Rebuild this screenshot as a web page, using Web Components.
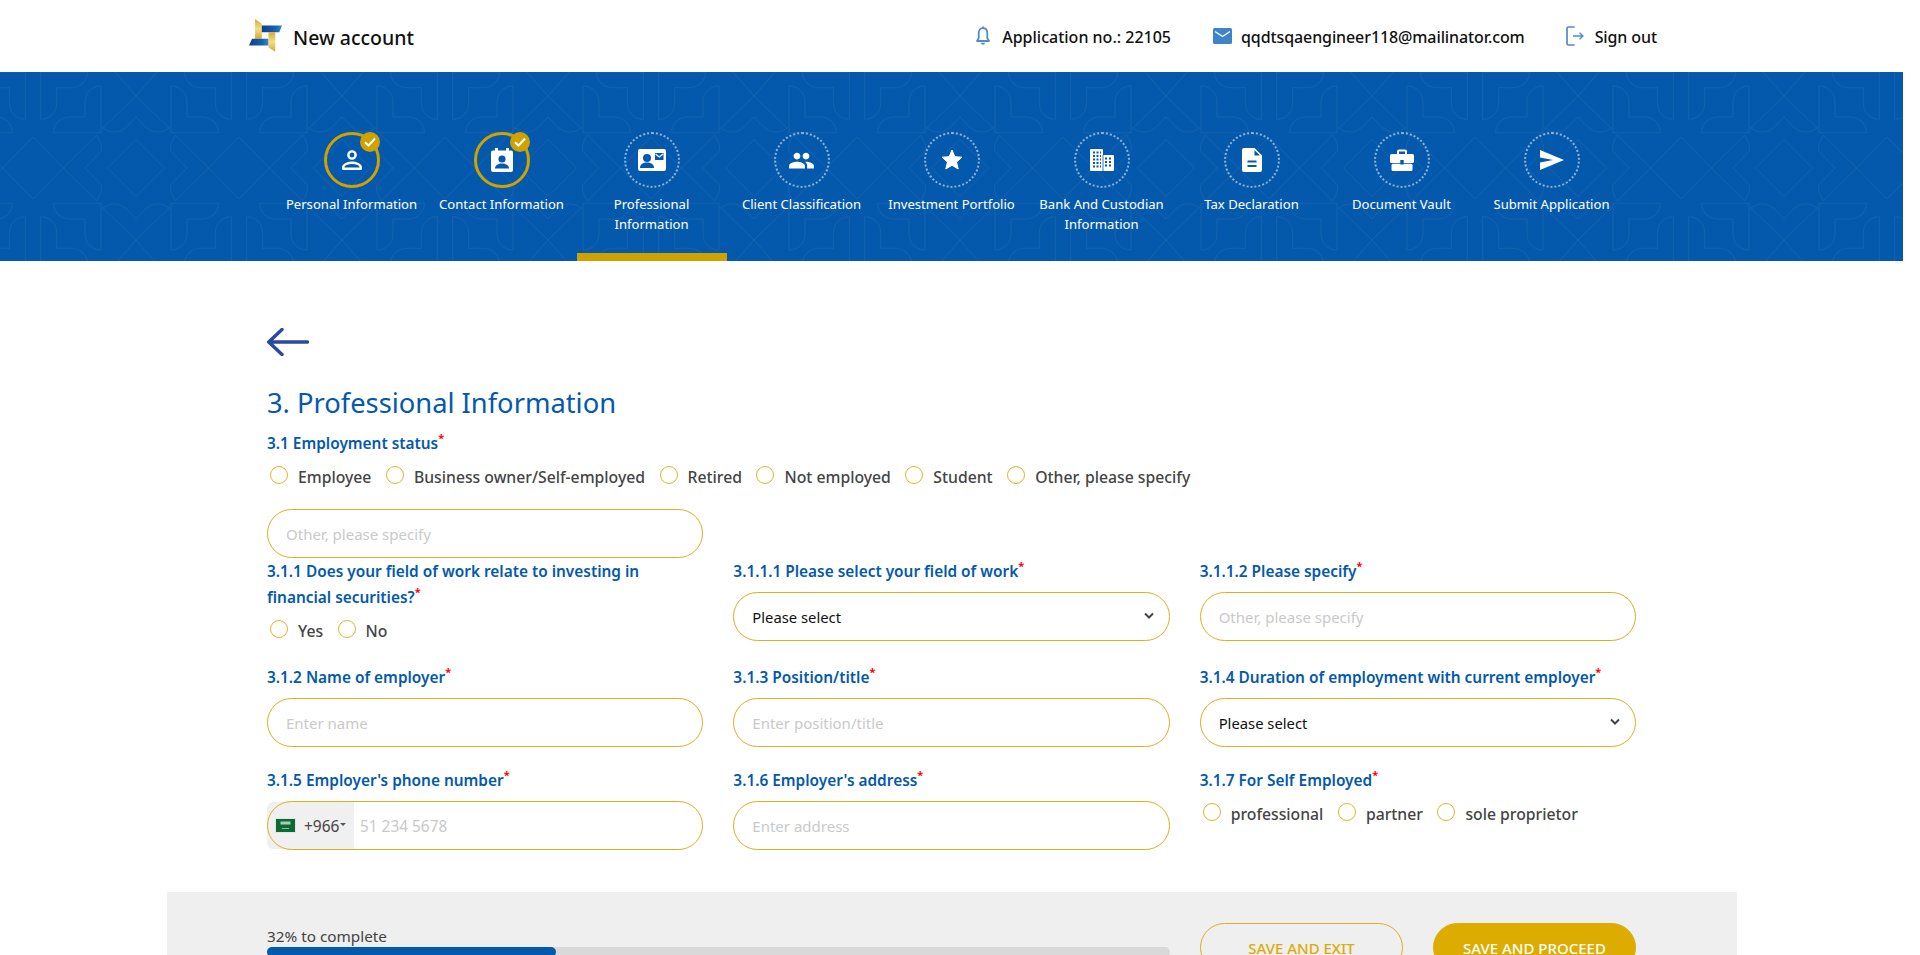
<!DOCTYPE html>
<html lang="en">
<head>
<meta charset="utf-8">
<title>New account</title>
<style>
    html { overflow: hidden; height: 955px; }
    body {
        margin: 0;
        width: 1903px;
        background: #fff;
        color: #444;
        font-family: "Noto Sans", "Open Sans", sans-serif;
    }
</style>
</head>
<body>
<kyc-header application="22105" email="qqdtsqaengineer118@mailinator.com"></kyc-header>
<kyc-steps>
    <kyc-step icon="person" done>Personal Information</kyc-step>
    <kyc-step icon="contact" done>Contact Information</kyc-step>
    <kyc-step icon="card" active>Professional Information</kyc-step>
    <kyc-step icon="people">Client Classification</kyc-step>
    <kyc-step icon="star">Investment Portfolio</kyc-step>
    <kyc-step icon="building">Bank And Custodian Information</kyc-step>
    <kyc-step icon="doc">Tax Declaration</kyc-step>
    <kyc-step icon="case">Document Vault</kyc-step>
    <kyc-step icon="send">Submit Application</kyc-step>
</kyc-steps>
<kyc-form>
    <kyc-section-title>3. Professional Information</kyc-section-title>
    <kyc-field class="top" label="3.1 Employment status">
        <kyc-radios>
            <kyc-radio>Employee</kyc-radio>
            <kyc-radio>Business owner/Self-employed</kyc-radio>
            <kyc-radio>Retired</kyc-radio>
            <kyc-radio>Not employed</kyc-radio>
            <kyc-radio>Student</kyc-radio>
            <kyc-radio>Other, please specify</kyc-radio>
        </kyc-radios>
    </kyc-field>
    <kyc-input class="other" placeholder="Other, please specify"></kyc-input>
    <kyc-grid>
        <kyc-field label="3.1.1 Does your field of work relate to investing in<br>financial securities?">
            <kyc-radios><kyc-radio>Yes</kyc-radio><kyc-radio>No</kyc-radio></kyc-radios>
        </kyc-field>
        <kyc-field label="3.1.1.1 Please select your field of work"><kyc-select></kyc-select></kyc-field>
        <kyc-field label="3.1.1.2 Please specify"><kyc-input placeholder="Other, please specify"></kyc-input></kyc-field>
        <kyc-field label="3.1.2 Name of employer"><kyc-input placeholder="Enter name"></kyc-input></kyc-field>
        <kyc-field label="3.1.3 Position/title"><kyc-input placeholder="Enter position/title"></kyc-input></kyc-field>
        <kyc-field label="3.1.4 Duration of employment with current employer"><kyc-select></kyc-select></kyc-field>
        <kyc-field label="3.1.5 Employer's phone number"><kyc-phone></kyc-phone></kyc-field>
        <kyc-field label="3.1.6 Employer's address"><kyc-input placeholder="Enter address"></kyc-input></kyc-field>
        <kyc-field label="3.1.7 For Self Employed">
            <kyc-radios><kyc-radio>professional</kyc-radio><kyc-radio>partner</kyc-radio><kyc-radio>sole proprietor</kyc-radio></kyc-radios>
        </kyc-field>
    </kyc-grid>
</kyc-form>
<kyc-footer percent="32"></kyc-footer>

<script>
const BLUE = '#0459ac';
const GOLD = '#dcac00';

// step icons, each with its own pixel size
const ICONS = {
    person: `<svg width="20" height="20" viewBox="0 0 20 20"><circle cx="10" cy="5" r="3.6" fill="none" stroke="#fff" stroke-width="2.4"/><path d="M1.200 18.800v-1.600c0-2.600 4.600-4.400 8.800-4.400s8.800 1.800 8.800 4.400v1.600z" fill="none" stroke="#fff" stroke-width="2.400" stroke-linejoin="round"/></svg>`,
    contact: `<svg width="22" height="24" viewBox="0 0 22 24"><rect y="2.500" width="22" height="21.500" rx="2" fill="#fff"/><rect x="4" width="3" height="4" fill="#fff"/><rect x="15" width="3" height="4" fill="#fff"/><circle cx="11" cy="11" r="3.6" fill="${BLUE}"/><path d="M4 20.500c0-3.500 3.500-5 7-5s7 1.500 7 5z" fill="${BLUE}"/></svg>`,
    card: `<svg width="28" height="22" viewBox="0 0 28 22"><rect width="28" height="22" rx="2" fill="#fff"/><circle cx="9" cy="9" r="4" fill="${BLUE}"/><path d="M2 19c0-4 3.500-5.500 7-5.500s7 1.500 7 5.500z" fill="${BLUE}"/><rect x="17" y="4" width="8.500" height="7" fill="${BLUE}"/><path d="M17.500 5l3.750 3 3.750-3" fill="none" stroke="#fff" stroke-width="1.200"/></svg>`,
    people: `<svg width="27" height="27" viewBox="0 0 24 24" fill="#fff"><path d="M16 11c1.660 0 2.990-1.340 2.990-3S17.660 5 16 5c-1.660 0-3 1.340-3 3s1.340 3 3 3zm-8 0c1.660 0 2.990-1.340 2.990-3S9.660 5 8 5C6.340 5 5 6.340 5 8s1.340 3 3 3zm0 2c-2.330 0-7 1.170-7 3.500V19h14v-2.500c0-2.330-4.670-3.500-7-3.500zm8 0c-.290 0-.620.020-.970.050 1.160.840 1.970 1.970 1.970 3.450V19h6v-2.500c0-2.330-4.670-3.500-7-3.500z"/></svg>`,
    star: `<svg width="24" height="24" viewBox="0 0 24 24"><path d="M12 17.270L18.180 21l-1.640-7.030L22 9.240l-7.190-.610L12 2 9.190 8.630 2 9.240l5.460 4.730L5.820 21z" fill="#fff" stroke="#fff" stroke-linejoin="round"/></svg>`,
    building: `<svg width="24" height="22" viewBox="0 0 24 22"><path d="M1 0h11a1 1 0 0 1 1 1v5h10a1 1 0 0 1 1 1v14a1 1 0 0 1-1 1H1a1 1 0 0 1-1-1V1a1 1 0 0 1 1-1z" fill="#fff"/><path d="M3 3.500h2M6.500 3.500h2M10 3.500h1M3 7h2M6.500 7h2M10 7h1M3 10.500h2M6.500 10.500h2M10 10.500h1M3 14h2M6.500 14h2M10 14h1M3 17.500h2M6.500 17.500h2M10 17.500h1M15 9.500h2M19 9.500h2M15 13h2M19 13h2M15 16.500h2M19 16.500h2" stroke="${BLUE}" stroke-width="2"/><path d="M13 6v16" stroke="${BLUE}" stroke-width=".8"/></svg>`,
    doc: `<svg width="20" height="24" viewBox="0 0 20 24"><path d="M2 0h10.500L20 7.500V22a2 2 0 0 1-2 2H2a2 2 0 0 1-2-2V2a2 2 0 0 1 2-2zm10.500 2v5.500H18zM5.500 12.500v2h9v-2zm0 4.500v2h9v-2z" fill="#fff" fill-rule="evenodd"/></svg>`,
    case: `<svg width="24" height="22" viewBox="0 0 24 22"><path d="M8 5.500V2.500a1 1 0 0 1 1-1h6a1 1 0 0 1 1 1v3" fill="none" stroke="#fff" stroke-width="2"/><rect y="5" width="24" height="9" rx="1.500" fill="#fff"/><rect x="1.500" y="14.800" width="21" height="7.200" rx="1.500" fill="#fff"/><rect x="10.300" y="11" width="3.400" height="4.500" rx=".6" fill="${BLUE}"/></svg>`,
    send: `<svg width="24" height="20" viewBox="0 0 24 20"><path d="M0 0l24 10L0 20v-7.500L13 10 0 7.500z" fill="#fff"/></svg>`
};

class KycHeader extends HTMLElement {
    connectedCallback() {
        this.attachShadow({ mode: 'open' });
        this.shadowRoot.innerHTML = `
            <style>
                :host {
                    display: flex;
                    align-items: center;
                    height: 72px;
                    padding: 2px 246px 0 249px;
                    box-sizing: border-box;
                    color: #111;
                }
                .brand {
                    display: flex;
                    align-items: center;
                    gap: 11px;
                    font-size: 19.5px;
                    font-weight: 500;
                    margin-right: auto;
                }
                .brand svg { margin-bottom: 3px; }
                .item {
                    display: flex;
                    align-items: center;
                    font-size: 16px;
                    font-weight: 500;
                    letter-spacing: -.1px;
                }
                .item svg { margin-bottom: 2px; }
                .app { gap: 11px; margin-right: 42px; letter-spacing: 0; }
                .mail { gap: 9px; margin-right: 41px; }
                .out { gap: 11px; }
            </style>
            <div class="brand">
                <svg width="33" height="33" viewBox="57 58 98 98">
                    <defs>
                        <linearGradient id="g" x1="0" y1="0" x2="0" y2="1"><stop offset="0" stop-color="#d9a92e"/><stop offset=".5" stop-color="#f3de86"/><stop offset="1" stop-color="#d6a736"/></linearGradient>
                        <linearGradient id="b" x1="0" y1="0" x2="1" y2="0"><stop offset="0" stop-color="#0f3f86"/><stop offset=".7" stop-color="#1a62b0"/><stop offset="1" stop-color="#2f8ed0"/></linearGradient>
                    </defs>
                    <path d="M75 58l20 14v45H75z" fill="url(#g)"/>
                    <path d="M95 77h60l-8 20H95z" fill="url(#b)"/>
                    <path d="M66 117h49v20H57z" fill="url(#b)"/>
                    <path d="M115 97h20v58l-20-12z" fill="url(#g)"/>
                </svg>
                <span>New account</span>
            </div>
            <div class="item app">
                <svg width="16" height="22" viewBox="0 0 16 22"><path d="M8 1.500v1.700M8 3.200c-3 0-4.300 2.300-4.300 5v5L2 16h12l-1.700-2.800v-5c0-2.700-1.300-5-4.300-5z" fill="none" stroke="#4f8ac9" stroke-width="1.800" stroke-linejoin="round"/><path d="M6 17.800a2 2 0 0 0 4 0z" fill="#4f8ac9"/></svg>
                <span>Application no.: ${this.getAttribute('application')}</span>
            </div>
            <div class="item mail">
                <svg width="19" height="16" viewBox="0 0 19 16"><rect width="19" height="16" rx="1.500" fill="#3f83c8"/><path d="M2 3.500l7.500 5 7.500-5" fill="none" stroke="#fff" stroke-width="1.400"/></svg>
                <span>${this.getAttribute('email')}</span>
            </div>
            <div class="item out">
                <svg width="18" height="20" viewBox="0 0 18 20"><path d="M8 1H2.500A1.500 1.500 0 0 0 1 2.500v15A1.500 1.500 0 0 0 2.500 19H8" fill="none" stroke="#4f8ac9" stroke-width="1.700" stroke-linecap="round"/><path d="M7 10h10M13.500 6.800L17 10l-3.500 3.200" fill="none" stroke="#4f8ac9" stroke-width="1.300"/></svg>
                <span>Sign out</span>
            </div>
        `;
    }
}
customElements.define('kyc-header', KycHeader);

class KycSteps extends HTMLElement {
    connectedCallback() {
        this.attachShadow({ mode: 'open' });
        // the tile repeats every 206px; one quarter is drawn and mirrored twice
        this.shadowRoot.innerHTML = `
            <style>
                :host {
                    display: flex;
                    justify-content: center;
                    position: relative;
                    height: 189px;
                    background: ${BLUE};
                    overflow: hidden;
                }
                .bg { position: absolute; left: 0; top: 0; }
                ::slotted(kyc-step) { position: relative; }
            </style>
            <svg class="bg" width="1903" height="189">
                <defs>
                    <g id="q" fill="none" stroke="#1562ae" stroke-width="3">
                        <path d="M99 213L190 306 290 207Q315 245 298 262L255 306"/>
                        <path d="M408 220L322 306"/>
                        <path d="M408 90L308 187Q348 212 378 184L408 153M408 90L345 18"/>
                        <path d="M303 60V200H160A47 47 0 0 1 207 153H255V107A47 47 0 0 1 303 60Z"/>
                        <path d="M122 160V18H263A47 47 0 0 1 216 65H170V113A47 47 0 0 1 122 160Z"/>
                    </g>
                    <pattern id="tile" width="206" height="192" patternUnits="userSpaceOnUse" x="33" y="0">
                        <g transform="scale(.33333) translate(-99 -18)">
                            <use href="#q"/>
                            <use href="#q" transform="matrix(-1 0 0 1 816 0)"/>
                            <use href="#q" transform="matrix(1 0 0 -1 0 612)"/>
                            <use href="#q" transform="matrix(-1 0 0 -1 816 612)"/>
                        </g>
                    </pattern>
                </defs>
                <rect width="1903" height="189" fill="url(#tile)"/>
            </svg>
            <slot></slot>
        `;
    }
}
customElements.define('kyc-steps', KycSteps);

class KycStep extends HTMLElement {
    connectedCallback() {
        this.attachShadow({ mode: 'open' });
        const done = this.hasAttribute('done');
        this.shadowRoot.innerHTML = `
            <style>
                :host {
                    display: flex;
                    flex-direction: column;
                    align-items: center;
                    width: 150px;
                    padding: 60px 8px 0;
                    box-sizing: border-box;
                    color: #fff;
                    font-size: 13.100px;
                    line-height: 20px;
                    text-align: center;
                    border-bottom: 8px solid transparent;
                }
                :host([active]) { border-bottom-color: #cfa200; }
                .ring {
                    position: relative;
                    display: flex;
                    align-items: center;
                    justify-content: center;
                    width: 56px;
                    height: 56px;
                    box-sizing: border-box;
                    border-radius: 50%;
                    border: 2px dotted rgba(255,255,255,.55);
                    margin-bottom: 6px;
                }
                :host([done]) .ring { border: 3px solid #cfa200; }
                .check {
                    position: absolute;
                    top: -3px;
                    right: -3px;
                    width: 20px;
                    height: 20px;
                    border-radius: 50%;
                    background: #cfa200;
                    display: flex;
                    align-items: center;
                    justify-content: center;
                }
                svg { display: block; }
            </style>
            <div class="ring">
                ${ICONS[this.getAttribute('icon')]}
                ${done ? '<span class="check"><svg width="12" height="10" viewBox="0 0 12 10"><path d="M1 5.200l3.500 3.300L11 1.500" fill="none" stroke="#fff" stroke-width="2"/></svg></span>' : ''}
            </div>
            <slot></slot>
        `;
    }
}
customElements.define('kyc-step', KycStep);

class KycForm extends HTMLElement {
    connectedCallback() {
        this.attachShadow({ mode: 'open' });
        this.shadowRoot.innerHTML = `
            <style>
                :host {
                    display: block;
                    width: 1369px;
                    margin-left: 267px;
                    padding-top: 67px;
                }
                .back { display: block; margin-bottom: 28px; }
                ::slotted(.top) { margin-top: 8px; }
                ::slotted(.other) { margin-top: 18px; width: 436px; }
            </style>
            <svg class="back" width="42" height="28" viewBox="0 0 42 28"><path d="M40.500 14H2M15 1.500L1.800 14 15 26.500" fill="none" stroke="#2a4a9f" stroke-width="3.400" stroke-linecap="round"/></svg>
            <slot></slot>
        `;
    }
}
customElements.define('kyc-form', KycForm);

class KycSectionTitle extends HTMLElement {
    connectedCallback() {
        this.attachShadow({ mode: 'open' });
        this.shadowRoot.innerHTML = `
            <style>
                :host {
                    display: block;
                    color: ${BLUE};
                    font-size: 27.300px;
                    line-height: 38px;
                }
            </style>
            <slot></slot>
        `;
    }
}
customElements.define('kyc-section-title', KycSectionTitle);

class KycGrid extends HTMLElement {
    connectedCallback() {
        this.attachShadow({ mode: 'open' });
        this.shadowRoot.innerHTML = `
            <style>
                :host {
                    display: grid;
                    grid-template-columns: repeat(3, 1fr);
                    grid-template-rows: auto 84px auto;
                    column-gap: 30px;
                    row-gap: 19px;
                }
            </style>
            <slot></slot>
        `;
    }
}
customElements.define('kyc-grid', KycGrid);

class KycField extends HTMLElement {
    connectedCallback() {
        this.attachShadow({ mode: 'open' });
        this.shadowRoot.innerHTML = `
            <style>
                :host {
                    display: flex;
                    flex-direction: column;
                    gap: 8px;
                    align-items: stretch;
                }
                label {
                    color: ${BLUE};
                    font-size: 15.400px;
                    font-weight: 600;
                    line-height: 26px;
                    padding-top: 1px;
                    margin-bottom: -1px;
                }
                sup {
                    color: #f00;
                    font-size: 11px;
                    line-height: 0;
                    vertical-align: 7px;
                    font-weight: 700;
                }
            </style>
            <label>${this.getAttribute('label')}<sup>*</sup></label>
            <slot></slot>
        `;
    }
}
customElements.define('kyc-field', KycField);

class KycRadios extends HTMLElement {
    connectedCallback() {
        this.attachShadow({ mode: 'open' });
        this.shadowRoot.innerHTML = `
            <style>
                :host {
                    display: flex;
                    gap: 11.500px;
                    padding: 1px 0 2px;
                }
            </style>
            <slot></slot>
        `;
    }
}
customElements.define('kyc-radios', KycRadios);

class KycRadio extends HTMLElement {
    connectedCallback() {
        this.attachShadow({ mode: 'open' });
        this.shadowRoot.innerHTML = `
            <style>
                :host {
                    display: flex;
                    gap: 10px;
                    padding-left: 3px;
                    color: #444;
                    font-size: 15.750px;
                    font-weight: 500;
                    line-height: 24px;
                }
                i {
                    display: block;
                    width: 18px;
                    height: 18px;
                    margin-top: 1px;
                    box-sizing: border-box;
                    border: 1.500px solid #e3b32a;
                    border-radius: 50%;
                }
            </style>
            <i></i><slot></slot>
        `;
    }
}
customElements.define('kyc-radio', KycRadio);

class KycInput extends HTMLElement {
    connectedCallback() {
        this.attachShadow({ mode: 'open' });
        this.shadowRoot.innerHTML = `
            <style>
                :host { display: block; }
                input {
                    display: block;
                    width: 100%;
                    height: 49px;
                    box-sizing: border-box;
                    padding: 0 18px;
                    border: 1px solid #e0ad1e;
                    border-radius: 25px;
                    background: #fff;
                    outline: none;
                    font: inherit;
                    font-size: 15px;
                }
                input::placeholder { color: #c9c9c9; opacity: 1; }
            </style>
            <input type="text" placeholder="${this.getAttribute('placeholder')}">
        `;
    }
}
customElements.define('kyc-input', KycInput);

class KycSelect extends HTMLElement {
    connectedCallback() {
        this.attachShadow({ mode: 'open' });
        this.shadowRoot.innerHTML = `
            <style>
                :host { display: block; position: relative; }
                select {
                    display: block;
                    width: 100%;
                    height: 49px;
                    box-sizing: border-box;
                    padding: 0 18px;
                    border: 1px solid #e0ad1e;
                    border-radius: 25px;
                    background: #fff;
                    color: #111;
                    appearance: none;
                    outline: none;
                    font: inherit;
                    font-size: 14.800px;
                }
                svg {
                    position: absolute;
                    right: 16px;
                    top: 20px;
                    pointer-events: none;
                }
            </style>
            <select><option>Please select</option></select>
            <svg width="10" height="8" viewBox="0 0 10 8"><path d="M1 1.500l4 4 4-4" fill="none" stroke="#444" stroke-width="2"/></svg>
        `;
    }
}
customElements.define('kyc-select', KycSelect);

class KycPhone extends HTMLElement {
    connectedCallback() {
        this.attachShadow({ mode: 'open' });
        this.shadowRoot.innerHTML = `
            <style>
                :host { display: block; position: relative; }
                .flag {
                    position: absolute;
                    left: 0;
                    top: 1px;
                    bottom: 1px;
                    width: 87px;
                    display: flex;
                    align-items: center;
                    gap: 8px;
                    padding-left: 8px;
                    box-sizing: border-box;
                    background: #f0f0f0;
                    border-radius: 6px 0 0 6px;
                    color: #444;
                    font-size: 15.500px;
                }
                .caret {
                    width: 0;
                    height: 0;
                    margin: -3px 0 0 -7px;
                    border: 3px solid transparent;
                    border-top: 3px solid #555;
                    border-bottom: 0;
                }
                input {
                    position: relative;
                    display: block;
                    width: 100%;
                    height: 49px;
                    box-sizing: border-box;
                    padding: 1px 18px 0 92px;
                    border: 1px solid #e0ad1e;
                    border-radius: 25px;
                    background: transparent;
                    outline: none;
                    font: inherit;
                    font-size: 15.400px;
                }
                input::placeholder { color: #c9c9c9; opacity: 1; }
            </style>
            <div class="flag">
                <svg width="21" height="15" viewBox="0 0 21 15"><rect x=".5" y=".5" width="20" height="14" fill="#0b6b35" stroke="#e4e4e4"/><rect x="5.500" y="3.500" width="10" height="3" fill="#a9cdb6"/><rect x="7" y="10" width="7" height=".8" fill="#a9cdb6"/></svg>
                <span>+966</span><span class="caret"></span>
            </div>
            <input type="tel" placeholder="51 234 5678">
        `;
    }
}
customElements.define('kyc-phone', KycPhone);

class KycFooter extends HTMLElement {
    connectedCallback() {
        this.attachShadow({ mode: 'open' });
        const pct = this.getAttribute('percent');
        this.shadowRoot.innerHTML = `
            <style>
                :host {
                    display: grid;
                    grid-template-columns: 903px 1fr;
                    column-gap: 30px;
                    width: 1570px;
                    height: 130px;
                    margin: 42px 0 0 167px;
                    padding: 31px 100px 0;
                    box-sizing: border-box;
                    background: #efefef;
                }
                .label {
                    color: #444;
                    font-size: 15.300px;
                    line-height: 24px;
                    margin-top: 1px;
                }
                .track {
                    height: 10px;
                    margin-top: -1px;
                    border-radius: 5px;
                    background: #d9d9d9;
                }
                .fill {
                    width: ${pct}%;
                    height: 100%;
                    border-radius: 5px;
                    background: ${BLUE};
                }
                .buttons { display: flex; gap: 30px; }
                button {
                    width: 203px;
                    height: 49px;
                    padding: 0;
                    border: 1px solid #e0ad1e;
                    border-radius: 25px;
                    background: transparent;
                    color: ${GOLD};
                    font: inherit;
                    font-size: 15px;
                    font-weight: 500;
                }
                button.primary { background: ${GOLD}; border-color: ${GOLD}; color: #fff; }
            </style>
            <div>
                <div class="label">${pct}% to complete</div>
                <div class="track"><div class="fill"></div></div>
            </div>
            <div class="buttons">
                <button>SAVE AND EXIT</button>
                <button class="primary">SAVE AND PROCEED</button>
            </div>
        `;
    }
}
customElements.define('kyc-footer', KycFooter);
</script>
</body>
</html>
